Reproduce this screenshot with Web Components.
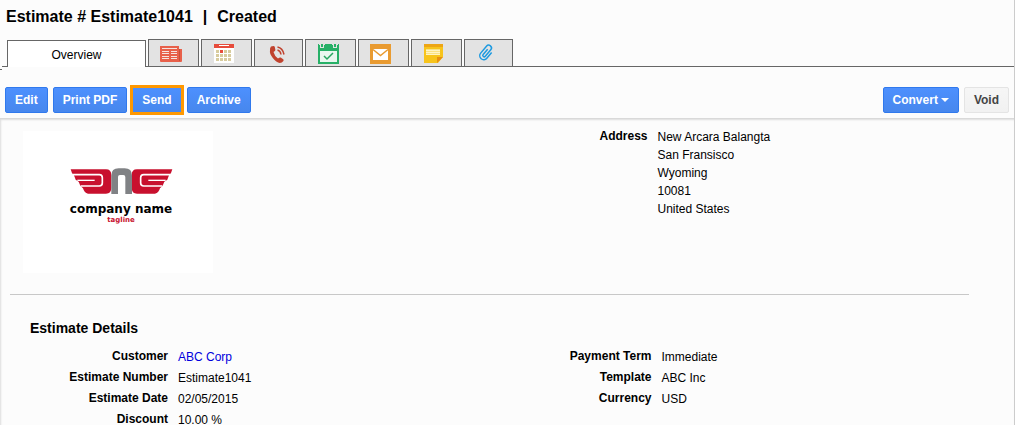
<!DOCTYPE html>
<html lang="en">
<head>
<meta charset="utf-8">
<title>Estimate # Estimate1041</title>
<style>
  html, body { margin: 0; height: 100%; }
  body { background: #fcfcfc; color: #000; font: 12px/18px "Liberation Sans", Arial, sans-serif; overflow: hidden; }
</style>
</head>
<body>
<estimate-page></estimate-page>

<script>
const define = (name, html) => {
  const template = document.createElement('template');
  template.innerHTML = html;
  customElements.define(name, class extends HTMLElement {
    constructor() {
      super();
      this.attachShadow({ mode: 'open' }).append(template.content.cloneNode(true));
    }
  });
};

/* Push button: variants "plain" and "marked" */
define('action-button', `
<style>
  :host { display: block; }
  button { display: flex; align-items: center; gap: 3px; box-sizing: border-box; height: 26px; margin: 0; padding: 0 9px;
    font: bold 12px/18px "Liberation Sans", Arial, sans-serif; color: #fff; border: 1px solid #3079ed; border-radius: 2px;
    background: linear-gradient(#4d90fe, #4787ed); white-space: nowrap; }
  :host([plain]) button { color: #444; border-color: #e4e4e4; background: linear-gradient(#f6f6f6, #f1f1f1); }
  :host([marked]) button { outline: 3px solid #ff9800; outline-offset: -1px; border-radius: 0; }
</style>
<button type="button"><slot></slot></button>`);

/* Icon tab of the strip */
define('icon-tab', `
<style>
  :host { display: block; }
  button { display: block; box-sizing: border-box; height: 28px; margin: 0; padding: 1px 15px 0 10px; border: 1px solid #666; background: #e3e3e3; }
  ::slotted(svg) { display: block; }
</style>
<button type="button" role="tab"><slot></slot></button>`);

define('tab-strip', `
<style>
  :host { display: flex; align-items: flex-end; }
  .edge { width: 2px; height: 1px; margin-bottom: -3px; background: #666; }
  .lead { width: 5px; height: 1px; background: #666; }
  .current { box-sizing: border-box; width: 139px; height: 27px; padding: 2px 0 0; border: 1px solid #666; border-bottom: 0; background: #fff;
    font: 12px/18px "Liberation Sans", Arial, sans-serif; color: #000; }
  .icons { display: flex; flex: 1; gap: 2px; padding-left: 2px; background: linear-gradient(#666, #666) bottom / 100% 1px no-repeat; }
</style>
<span class="edge"></span><span class="lead"></span>
<button class="current" type="button" role="tab" aria-selected="true">Overview</button>
<div class="icons">
  <icon-tab><svg width="24" height="24"><path fill="#e8604a" d="M19 7h4v12q0 1-1 1h-3z"/><path fill="#e8604a" d="M1 4h19v16H2q-1 0-1-1z"/><path fill="#c9503a" d="M20 7h1v12h-1z"/><path fill="none" stroke="#f6e4df" d="M3 6.500h15M3 9.500h7M12 9.500h6M3 11.500h7M12 11.500h6M3 14.500h7M12 14.500h6M3 16.500h7M12 16.500h6"/></svg></icon-tab>
  <icon-tab><svg width="24" height="24"><path fill="#fff" d="M2 2h20v19H2z"/><path fill="#e74c3c" d="M2 2h20v4H2z"/><path fill="#fff" d="M7 3h10v1H7z"/><path fill="none" stroke="#d8cc9e" stroke-width="3" stroke-dasharray="3 1" d="M4 9.500h16M4 13.500h16M4 17.500h16"/><path fill="#e74c3c" d="M8 8h3v3H8z"/></svg></icon-tab>
  <icon-tab><svg width="22" height="24" viewBox="0 1 22 24"><path fill="#c0422e" d="M6 5.500L8.500 5q1 0 1.300 1l.6 3q0 1-1.900 2 1 4 4.500 6.500 1.800-1.500 2.700-1l2.500 1.800q.8.700.2 1.600-1.400 2.100-3.600 2.100-3.500-.5-7-5T5 9.500Q4.700 7 6 5.500z"/><path fill="none" stroke="#c0422e" stroke-width="1.500" d="M12.500 9q3 .7 3.500 4.500M12.500 6q5.200 1 6.500 7.500"/></svg></icon-tab>
  <icon-tab><svg width="24" height="24"><path fill="#27b067" d="M2 3h21v19H2z"/><path fill="#e9f7ef" d="M4 9h17v11H4z"/><path fill="#e3e3e3" d="M4 2h4v4H4zM17 2h4v4h-4z"/><path fill="#27b067" d="M5 2h2v3H5zM18 2h2v3h-2zM9 2h7v2H9zM2 2h1v2H2zM22 2h1v2h-1z"/><path fill="none" stroke="#27a55f" stroke-width="1.500" d="M8 14l3 3 6-6"/></svg></icon-tab>
  <icon-tab><svg width="24" height="24"><path fill="#e99b31" d="M1 2h21v20H1z"/><path fill="#fff" d="M4 7h15v11H4z"/><path fill="none" stroke="#e99b31" stroke-width="1.500" d="M4 7.500l7.500 6 7.500-6"/></svg></icon-tab>
  <icon-tab><svg width="24" height="24"><path fill="#f7c41c" d="M2 2h19v13l-5 6H2z"/><path fill="#eda514" d="M2 2h19v3H2z"/><path fill="#e88f12" d="M15 15h6l-6 6z"/><path fill="none" stroke="#fff4c4" d="M4 8.500h14M4 10.500h14M4 12.500h14"/><path fill="none" stroke="#fae283" d="M4 7.500h14M4 9.500h14M4 11.500h14"/></svg></icon-tab>
  <icon-tab><svg width="22" height="24" viewBox="0 1 22 24"><g transform="rotate(40 11 12)" fill="none" stroke="#1e9ae0" stroke-width="1.500"><path d="M15 8v7.500a4 4 0 0 1-8 0V6.500a2.800 2.800 0 0 1 5.600 0V15a1.400 1.400 0 0 1-2.800 0V8"/></g></svg></icon-tab>
</div>`);

define('company-logo', `
<style>
  :host { display: block; width: 190px; background: #fff; }
  svg { display: block; }
  text { font-family: "DejaVu Sans", sans-serif; font-weight: bold; text-anchor: middle; }
</style>
<svg width="190" height="142" role="img" aria-label="company name">
  <defs><g id="wing">
    <path fill="#c8102e" d="M62 43H168Q184 43 184 60V99Q184 116 168 116H114Q103 114 99 100L91 92 86 80 77 74 72 61Q64 54 62 43z"/>
    <path fill="none" stroke="#fff" stroke-width="5" d="M68 59H148Q157 59 157 68V84Q157 93 148 93H92"/>
    <path fill="none" stroke="#fff" stroke-width="4" d="M82 76H134"/>
  </g></defs>
  <g transform="translate(27 24) scale(.3333)">
    <use href="#wing"/>
    <use href="#wing" transform="matrix(-1 0 0 1 429 0)"/>
    <path fill="#808285" d="M184 117V62Q184 40 206 40H224Q246 40 246 62V117H226V66Q226 60 220 60H210Q204 60 204 66V117z"/>
  </g>
  <text x="98" y="82" font-size="12">company name</text>
  <text x="98" y="91" font-size="7" fill="#c8102e">tagline</text>
</svg>`);

/* One label and value pair, the label aligned to the right of its column */
define('form-field', `
<style>
  :host { display: block; }
  dl { display: grid; grid-template-columns: 158px 1fr; column-gap: 10px; margin: 0; }
  dt { text-align: right; font-weight: bold; }
  dd { margin: 0; padding-top: 1px; }
</style>
<dl><dt><slot name="label"></slot></dt><dd><slot></slot></dd></dl>`);

define('estimate-page', `
<style>
  :host { display: flex; flex-direction: column; box-sizing: border-box; min-height: 100%; border-right: 1px solid #ccc; }
  h1 { display: flex; gap: 10px; margin: 0; padding: 7px 6px 12px; font-size: 16px; line-height: 20px; }
  .bar { display: flex; gap: 5px; padding: 20px 5px 5px; }
  .push { margin-left: auto; }
  .panel { flex: 1; box-sizing: border-box; padding: 12px 45px 0 10px; border-top: 1px solid #d9d9d9; box-shadow: inset 1px 1px 2px #ddd; }
  .top { display: grid; grid-template-columns: 1fr 1fr; align-items: start; padding-bottom: 21px; border-bottom: 1px solid #c8c8c8; }
  company-logo { margin-left: 13px; }
  .address { margin-top: -4px; }
  h2 { margin: 0; padding: 24px 20px 9px; font-size: 14px; line-height: 18px; }
  .details { display: grid; grid-template-columns: 1fr 1fr; margin-right: -8px; }
  .details form-field { line-height: 20px; }
  a { color: #00d; text-decoration: none; }
</style>
<h1><span>Estimate # Estimate1041</span><span>|</span><span>Created</span></h1>
<tab-strip role="tablist"></tab-strip>
<div class="bar">
  <action-button>Edit</action-button>
  <action-button>Print PDF</action-button>
  <action-button marked>Send</action-button>
  <action-button>Archive</action-button>
  <action-button class="push">Convert <svg width="8" height="4"><path fill="#fff" d="M0 0h8L4 4z"/></svg></action-button>
  <action-button plain>Void</action-button>
</div>
<div class="panel">
  <div class="top">
    <company-logo></company-logo>
    <form-field class="address"><span slot="label">Address</span>New Arcara Balangta<br>San Fransisco<br>Wyoming<br>10081<br>United States</form-field>
  </div>
  <h2>Estimate Details</h2>
  <div class="details">
    <div>
      <form-field><span slot="label">Customer</span><a href="#customer">ABC Corp</a></form-field>
      <form-field><span slot="label">Estimate Number</span>Estimate1041</form-field>
      <form-field><span slot="label">Estimate Date</span>02/05/2015</form-field>
      <form-field><span slot="label">Discount</span>10.00 %</form-field>
    </div>
    <div>
      <form-field><span slot="label">Payment Term</span>Immediate</form-field>
      <form-field><span slot="label">Template</span>ABC Inc</form-field>
      <form-field><span slot="label">Currency</span>USD</form-field>
    </div>
  </div>
</div>`);
</script>
</body>
</html>
